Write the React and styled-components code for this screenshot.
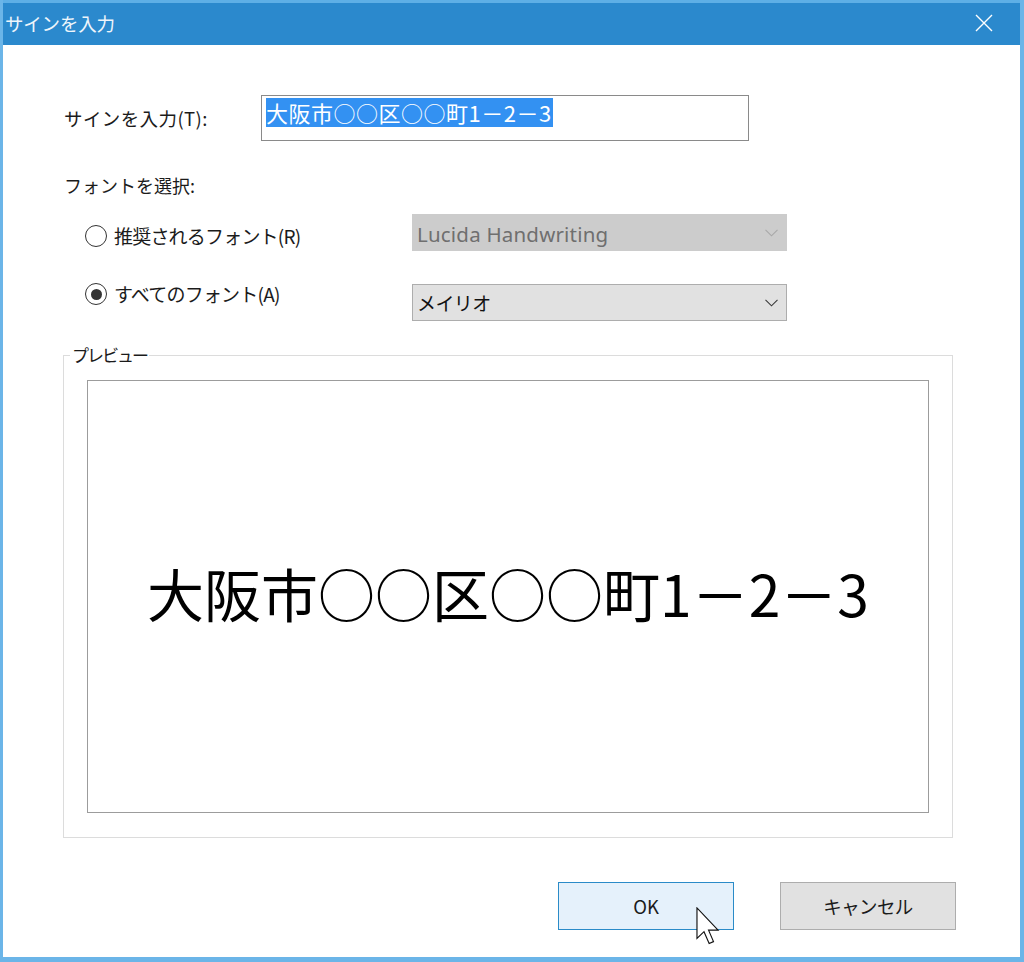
import React from 'react';
import styled, { createGlobalStyle } from 'styled-components';

const GlobalStyle = createGlobalStyle`
  html, body {
    margin: 0;
    padding: 0;
    background: #ffffff;
  }
  * {
    box-sizing: border-box;
  }
`;

const JP = `"Noto Sans CJK JP", "Noto Sans", sans-serif`;
const LATIN = `"Noto Sans", "Noto Sans CJK JP", sans-serif`;

const App = () => {
    return (
        <>
            <GlobalStyle />
            <Window>
                <TitleBar>
                    <Title>サインを入力</Title>
                    <CloseButton aria-label="close">
                        <svg width="18" height="18" viewBox="0 0 18 18">
                            <path d="M1 1 L17 17 M17 1 L1 17" stroke="#ffffff" strokeWidth="1.4" fill="none" />
                        </svg>
                    </CloseButton>
                </TitleBar>
                <Content>
                    <InputRow>
                        <Label>サインを入力(T):</Label>
                        <TextBox>
                            <Selection>大阪市○○区○○町1－2－3</Selection>
                        </TextBox>
                    </InputRow>

                    <SectionLabel>フォントを選択:</SectionLabel>

                    <RadioRow first>
                        <RadioLabel offset={ 9 }>
                            <Radio />
                            <RadioText>推奨されるフォント(R)</RadioText>
                        </RadioLabel>
                        <Select disabled>
                            <SelectText disabled latin>Lucida Handwriting</SelectText>
                            <Chevron disabled />
                        </Select>
                    </RadioRow>

                    <RadioRow>
                        <RadioLabel offset={ -3 }>
                            <Radio checked />
                            <RadioText>すべてのフォント(A)</RadioText>
                        </RadioLabel>
                        <Select>
                            <SelectText>メイリオ</SelectText>
                            <Chevron />
                        </Select>
                    </RadioRow>

                    <Group>
                        <Legend>プレビュー</Legend>
                        <PreviewBox>
                            <PreviewText>大阪市○○区○○町1－2－3</PreviewText>
                        </PreviewBox>
                    </Group>

                    <ButtonRow>
                        <Button primary>
                            OK
                            <Cursor />
                        </Button>
                        <Button>キャンセル</Button>
                    </ButtonRow>
                </Content>
            </Window>
        </>
    );
}

const Chevron = ({ disabled }) => (
    <ChevronIcon width="13" height="8" viewBox="0 0 13 8">
        <path d="M0.5 0.8 L6.5 6.8 L12.5 0.8" stroke={ disabled ? '#a8a8a8' : '#3a3a3a' } strokeWidth="1.1" fill="none" />
    </ChevronIcon>
);

const Cursor = () => (
    <CursorIcon width="24" height="38" viewBox="0 0 12.6 20">
        <path
            d="M0.5 0.5 L0.5 16.5 L4.2 13 L6.9 19.2 L9.2 18.2 L6.6 12.2 L11.6 12.2 Z"
            fill="#ffffff"
            stroke="#111111"
            strokeWidth="0.6"
            strokeLinejoin="miter"
        />
    </CursorIcon>
);

export default App;

const Window = styled.div`
  width: 1024px;
  height: 962px;
  display: flex;
  flex-direction: column;
  border-left: 3px solid #6bb5e8;
  border-right: 4px solid #6bb5e8;
  border-bottom: 5px solid #6bb5e8;
  background: #ffffff;
  overflow: hidden;
`;

const TitleBar = styled.div`
  height: 45px;
  flex: 0 0 45px;
  margin: 0 -4px 0 -3px;
  padding: 0 14px 0 5px;
  display: flex;
  align-items: center;
  justify-content: space-between;
  background: #2b89cd;
  border-top: 3px solid #5eafe6;
`;

const Title = styled.div`
  font-family: ${ JP };
  font-size: 18.5px;
  color: #eef5fb;
  letter-spacing: -0.2px;
  margin-top: -2px;
`;

const CloseButton = styled.div`
  width: 44px;
  height: 40px;
  display: flex;
  align-items: center;
  justify-content: center;
  margin-right: 4px;
  margin-top: -2px;
`;

const Content = styled.div`
  flex: 1;
  display: flex;
  flex-direction: column;
  padding: 50px 64px 0 60px;
`;

const InputRow = styled.div`
  display: flex;
  align-items: center;
  height: 46px;
`;

const Label = styled.div`
  width: 198px;
  padding-left: 1px;
  font-family: ${ JP };
  font-size: 18.5px;
  color: #1b1b1b;
  letter-spacing: 0.4px;
`;

const TextBox = styled.div`
  width: 488px;
  height: 46px;
  border: 1px solid #8a8a8a;
  padding: 2px 0 0 4px;
  background: #ffffff;
`;

const Selection = styled.span`
  display: inline-block;
  height: 29px;
  line-height: 29px;
  padding-right: 1px;
  background: #3391f2;
  color: #ffffff;
  font-family: ${ JP };
  font-size: 22px;
  letter-spacing: 0.5px;
`;

const SectionLabel = styled.div`
  margin-top: 31px;
  height: 26px;
  line-height: 26px;
  padding-left: 1px;
  font-family: ${ JP };
  font-size: 18px;
  color: #1b1b1b;
`;

const RadioRow = styled.div`
  display: flex;
  align-items: flex-start;
  margin-top: ${ ({ first }) => (first ? '16px' : '33px') };
`;

const RadioLabel = styled.div`
  width: 349px;
  height: 26px;
  display: flex;
  align-items: center;
  padding-left: 22px;
  margin-top: ${ ({ offset }) => offset }px;
`;

const Radio = styled.span`
  width: 22px;
  height: 22px;
  border-radius: 50%;
  border: 1.7px solid #333333;
  display: flex;
  align-items: center;
  justify-content: center;
  flex: 0 0 auto;

  &::after {
    content: '';
    width: 11px;
    height: 11px;
    border-radius: 50%;
    background: ${ ({ checked }) => (checked ? '#333333' : 'transparent') };
  }
`;

const RadioText = styled.span`
  margin-left: 7px;
  line-height: 26px;
  font-family: ${ JP };
  font-size: 19px;
  color: #1b1b1b;
  letter-spacing: -0.8px;
`;

const Select = styled.div`
  width: 375px;
  height: 37px;
  display: flex;
  align-items: center;
  justify-content: space-between;
  padding: 0 8px 0 4px;
  background: ${ ({ disabled }) => (disabled ? '#cccccc' : '#e1e1e1') };
  border: 1px solid ${ ({ disabled }) => (disabled ? '#cccccc' : '#adadad') };
`;

const SelectText = styled.span`
  font-family: ${ ({ latin }) => (latin ? LATIN : JP) };
  font-size: ${ ({ latin }) => (latin ? '20.5px' : '19px') };
  color: ${ ({ disabled }) => (disabled ? '#6f6f6f' : '#111111') };
  letter-spacing: ${ ({ latin }) => (latin ? '0.2px' : '-0.6px') };
  margin-top: ${ ({ latin }) => (latin ? '2px' : '0') };
`;

const ChevronIcon = styled.svg`
  display: block;
  margin-top: 1px;
`;

const Group = styled.fieldset`
  margin: 22px 3px 0 0;
  padding: 0;
  border: 1px solid #dcdcdc;
  min-width: 0;
`;

const Legend = styled.legend`
  margin-left: 6px;
  padding: 0 2px;
  font-family: ${ JP };
  font-size: 17px;
  line-height: 24px;
  color: #1b1b1b;
  letter-spacing: -2px;
`;

const PreviewBox = styled.div`
  margin: 13px 23px 24px 23px;
  height: 433px;
  border: 1.5px solid #9c9c9c;
  background: #ffffff;
  display: flex;
  align-items: center;
  justify-content: center;
`;

const PreviewText = styled.div`
  font-family: ${ JP };
  font-size: 57px;
  color: #000000;
  margin-top: -10px;
`;

const ButtonRow = styled.div`
  display: flex;
  justify-content: flex-end;
  gap: 46px;
  margin-top: 44px;
`;

const Button = styled.div`
  position: relative;
  width: 176px;
  height: 48px;
  display: flex;
  align-items: center;
  justify-content: center;
  font-family: ${ JP };
  font-size: 18.5px;
  color: #1b1b1b;
  background: ${ ({ primary }) => (primary ? '#e5f1fb' : '#e1e1e1') };
  border: 1px solid ${ ({ primary }) => (primary ? '#2a8bc8' : '#adadad') };
  letter-spacing: ${ ({ primary }) => (primary ? '0' : '-0.6px') };
`;

const CursorIcon = styled.svg`
  position: absolute;
  left: 137px;
  top: 24px;
  display: block;
`;
